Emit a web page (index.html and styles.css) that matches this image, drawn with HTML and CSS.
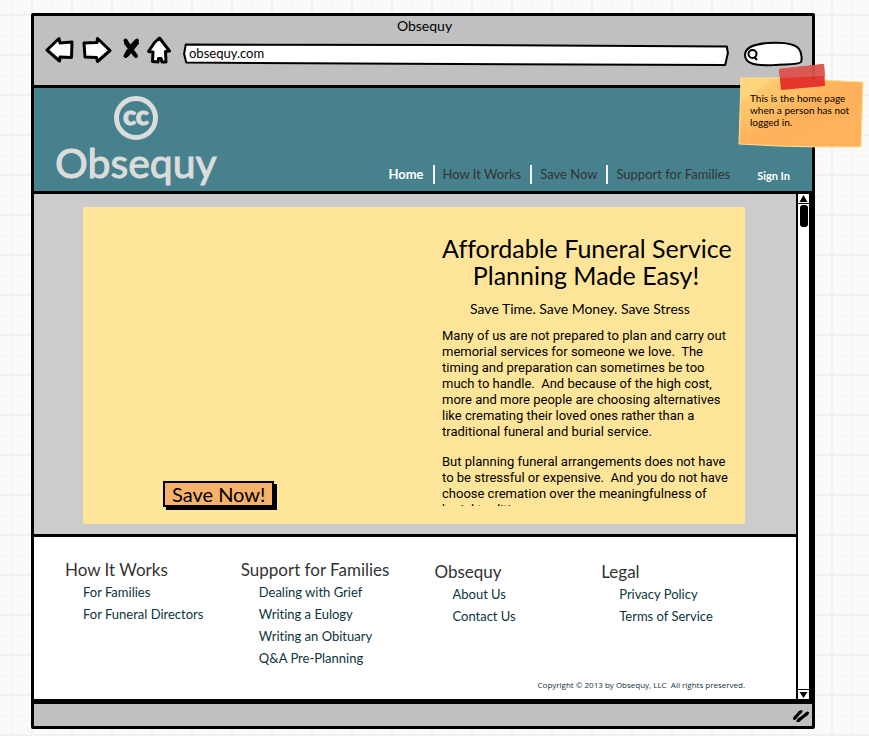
FILE: index.html
```html
<!DOCTYPE html>
<html lang="en">
<head>
<meta charset="utf-8">
<meta name="viewport" content="width=device-width, initial-scale=1">
<title>Obsequy</title>
<link rel="stylesheet" href="styles.css">
</head>
<body>
<div class="window">
  <div class="chrome">
    <div class="window-title">Obsequy</div>
    <div class="toolbar">
      <button class="tool tool-back" type="button" aria-label="Back"><svg width="30" height="28" viewBox="0 0 30 28"><path d="M2 14 14 2.500 15 7 27 6 26.500 21.500 15 21 14.500 25Z"/></svg></button>
      <button class="tool tool-forward" type="button" aria-label="Forward"><svg width="30" height="28" viewBox="0 0 30 28"><path d="M2 7 15 6.500 15.500 2.500 28 14.500 15.500 25.500 14.500 21.500 3 21Z"/></svg></button>
      <button class="tool tool-stop" type="button" aria-label="Stop"><svg width="18" height="28" viewBox="0 0 18 28"><path class="cross" d="M3.500 4.500Q8 12.500 14 20M15 4.500Q8 11 3.500 20M4 7 13 19M15 7 5 19"/></svg></button>
      <button class="tool tool-home" type="button" aria-label="Home page"><svg width="24" height="28" viewBox="0 0 24 28"><path d="M12.500 2 22.500 15 18.500 15.500 19 26 15 26 14 22.500 11.500 22.500 11 26 5.500 25.500 6 16 1.500 15.500 7.500 6.500Z"/></svg></button>
      <div class="address">
        <svg viewBox="0 0 100 24" preserveAspectRatio="none" aria-hidden="true"><path d="M.5 1.500 50 2 99.600 3.500 99.800 10 99.300 22 50 21 .6 19.500 .2 11Z"/></svg>
        <input type="text" value="obsequy.com" aria-label="Address">
      </div>
      <div class="search">
        <svg viewBox="0 0 61 26" aria-hidden="true"><path d="M2 13C2 5 11 2 25 1 43 0 53 3 56 7 59 11 59 18 58 20 56 23 43 22 31 23 13 24 2 22 2 13Z"/><circle cx="9.500" cy="12" r="4"/><path d="M11 15 14 18"/></svg>
        <input type="search" aria-label="Search">
      </div>
    </div>
  </div>

  <header class="site-header">
    <a class="brand" href="#"><span class="brand-mark">cc</span><span class="brand-name">Obsequy</span></a>
    <nav class="site-nav" aria-label="Main">
      <a class="current" href="#">Home</a>
      <a href="#">How It Works</a>
      <a href="#">Save Now</a>
      <a href="#">Support for Families</a>
    </nav>
    <a class="sign-in" href="#">Sign In</a>
  </header>

  <div class="viewport">
    <div class="page">
      <main class="hero">
        <div class="hero-panel">
          <div class="hero-action"><button class="save" type="button">Save Now!</button></div>
          <div class="hero-copy">
            <h1>Affordable Funeral Service<br>Planning Made Easy!</h1>
            <p class="tagline">Save Time. Save Money. Save Stress</p>
            <div class="story">
              <p>Many of us are not prepared to plan and carry out<br>memorial services for someone we love.&nbsp; The<br>timing and preparation can sometimes be too<br>much to handle.&nbsp; And because of the high cost,<br>more and more people are choosing alternatives<br>like cremating their loved ones rather than a<br>traditional funeral and burial service.</p>
              <p>But planning funeral arrangements does not have<br>to be stressful or expensive.&nbsp; And you do not have<br>choose cremation over the meaningfulness of<br>burial traditions.</p>
            </div>
          </div>
        </div>
      </main>
      <footer class="site-footer">
        <div class="columns">
          <section><h2>How It Works</h2><ul><li><a href="#">For Families</a></li><li><a href="#">For Funeral Directors</a></li></ul></section>
          <section><h2>Support for Families</h2><ul><li><a href="#">Dealing with Grief</a></li><li><a href="#">Writing a Eulogy</a></li><li><a href="#">Writing an Obituary</a></li><li><a href="#">Q&amp;A Pre-Planning</a></li></ul></section>
          <section class="lower"><h2>Obsequy</h2><ul><li><a href="#">About Us</a></li><li><a href="#">Contact Us</a></li></ul></section>
          <section class="lower"><h2>Legal</h2><ul><li><a href="#">Privacy Policy</a></li><li><a href="#">Terms of Service</a></li></ul></section>
        </div>
        <p class="copyright">Copyright © 2013 by Obsequy, LLC&nbsp; All rights preserved.</p>
      </footer>
    </div>
    <div class="scrollbar" aria-hidden="true">
      <svg class="arrow up" viewBox="0 0 11 9"><path d="M5.500 1 9.500 8 1.500 8Z"/></svg>
      <div class="thumb"></div>
      <svg class="arrow down" viewBox="0 0 11 9"><path d="M1.500 2 9.500 2 5.500 8Z"/></svg>
    </div>
  </div>

  <div class="status"><svg width="18" height="14" viewBox="0 0 18 14" aria-hidden="true"><path d="M2.500 10.500 8 4M6 13 15.500 5M3 9.500 9 3.500M7 11.500 15 6"/></svg></div>

  <aside class="note">
    <svg class="paper" viewBox="0 0 126 72" preserveAspectRatio="none" aria-hidden="true">
      <defs><linearGradient id="paper" x1="0" y1="0" x2="1" y2="1"><stop offset="0" stop-color="#ffd277"/><stop offset=".28" stop-color="#ffc368"/><stop offset=".5" stop-color="#ffb05b"/><stop offset="1" stop-color="#ffb25c"/></linearGradient></defs>
      <path d="M3 1 40 1 86 3 125 5 124 40 123 70 80 70 40 69 1 67 2 35Z" fill="url(#paper)" stroke="#ffe48c"/>
      <path d="M4 3 35 2 18 14 4 25Z" fill="#ffdb83" opacity=".6"/>
    </svg>
    <svg class="tape" viewBox="0 0 46 27" aria-hidden="true"><path d="M0 5 45 0 46 22 2 26Z" fill="#e32f27"/><path d="M0 5 45 0 46 12 1 14Z" fill="#dc544e"/></svg>
    <p>This is the home page<br>when a person has not<br>logged in.</p>
  </aside>
</div>
</body>
</html>
```
FILE: styles.css
```css
* { box-sizing: border-box; }

body {
  margin: 0;
  padding: 13px 54px 7px 31px;
  font-family: Lato, "Liberation Sans", sans-serif;
  font-size: 14px;
  font-variant-ligatures: none;
  line-height: 16px;
  color: #000;
  background-color: #fafafa;
  background-image:
    linear-gradient(90deg, #f1f1f1 2px, transparent 2px),
    linear-gradient(#f1f1f1 2px, transparent 2px),
    linear-gradient(90deg, #f4f4f4 1px, transparent 1px),
    linear-gradient(#f4f4f4 1px, transparent 1px);
  background-size: 40px 40px;
  background-position: 31px 0, 0 14px, 12px 0, 0 35px;
}

a { color: inherit; text-decoration: none; }
h1, h2, p, ul { margin: 0; padding: 0; font-weight: 400; }
ul { list-style: none; }
button, input { font: inherit; color: inherit; }

.window {
  position: relative;
  border: 3px solid #000;
  border-radius: 2px;
  background: #c0c0c0;
}

/* browser chrome */
.chrome { padding: 2px 8px 17px 11px; border-bottom: 3px solid #000; }
.window-title { text-align: center; }
.toolbar { display: flex; align-items: center; height: 34px; }
.tool { display: block; padding: 0; border: 0; background: none; margin-right: 7px; }
.tool svg { display: block; margin-top: -2px; fill: #fff; stroke: #000; stroke-width: 3; stroke-linejoin: round; }
.tool-forward { margin-right: 10px; }
.tool .cross { fill: none; stroke-width: 4; stroke-linecap: round; }
.tool-home { margin-right: 12px; }
.address { position: relative; flex: 1; height: 24px; margin: 7px 14px 0 0; }
.search { position: relative; flex: none; width: 61px; height: 26px; margin-top: 7px; }
.address svg, .search svg {
  position: absolute;
  inset: 0;
  width: 100%;
  height: 100%;
  overflow: visible;
  fill: #fff;
  stroke: #000;
  stroke-width: 2;
  stroke-linejoin: round;
}
.address path { vector-effect: non-scaling-stroke; }
.address input, .search input {
  position: relative;
  display: block;
  width: 100%;
  height: 20px;
  padding: 0 6px;
  border: 0;
  outline: 0;
  background: none;
  font-size: 13px;
}
.search input { padding-left: 20px; }

/* site header */
.site-header {
  display: flex;
  align-items: flex-end;
  height: 106px;
  padding: 0 22px 5px 21px;
  border-bottom: 3px solid #000;
  background: #47818e;
}
.brand { display: flex; flex-direction: column; align-items: center; color: #dcdcdc; }
.brand-mark {
  width: 44px;
  height: 44px;
  border: 5px solid;
  border-radius: 50%;
  font-size: 27px;
  font-weight: 900;
  line-height: 27px;
  text-align: center;
  -webkit-text-stroke: 1px #dcdcdc;
}
.brand-name { font-size: 41px; line-height: 46px; -webkit-text-stroke: 1px #dcdcdc; }
.site-nav { display: flex; margin-left: auto; font-size: 13px; color: #333; }
.site-nav a { padding: 0 9px 0 8px; line-height: 19px; margin-bottom: 2px; }
.site-nav a + a { border-left: 2px solid #f3f3f3; }
.site-nav .current { color: #fff; font-weight: 700; }
.sign-in { margin: 0 0 2px 18px; font-size: 11px; font-weight: 700; color: #fff; }

/* scrolling page */
.viewport { display: flex; }
.page { flex: 1; min-width: 0; }
.hero { padding: 13px 51px 10px 49px; border-bottom: 3px solid #000; background: #ccc; }
.hero-panel { display: flex; background: #ffe599; }
.hero-action { flex: 1; display: flex; align-items: flex-end; padding: 0 0 17px 80px; }
.save {
  padding: 0 7px;
  border: 2px solid #000;
  background: #f6b26b;
  box-shadow: 3px 3px 0 #000;
  font-size: 20px;
  line-height: 22px;
}
.hero-copy { flex: none; width: 303px; padding: 28px 0 18px; }
.hero-copy h1 { width: 288px; font-size: 25px; line-height: 27px; text-align: center; white-space: nowrap; }
.tagline { width: 276px; margin-top: 12px; text-align: center; }
.story { height: 178px; margin-top: 11px; overflow: hidden; font-family: Roboto, "Liberation Sans", sans-serif; font-size: 13px; white-space: nowrap; }
.story p + p { margin-top: 14px; }

.site-footer { padding: 22px 51px 8px 31px; background: #fff; color: #0c343d; }
.columns { display: grid; grid-template-columns: 176fr 194fr 167fr 144fr; min-height: 120px; }
.columns h2 { font-size: 17px; line-height: 22px; color: #333; }
.columns ul { padding-left: 18px; }
.columns li { font-size: 13px; line-height: 22px; }
.columns .lower { padding-top: 2px; }
.copyright { font-family: "Open Sans", "Liberation Sans", sans-serif; font-size: 8px; line-height: 12px; text-align: right; }

.scrollbar {
  display: flex;
  flex-direction: column;
  width: 16px;
  border: solid #000;
  border-width: 0 2px;
  background: #fff;
  box-shadow: inset -1px 0 0 #000;
}
.arrow { flex: none; width: 11px; height: 10px; }
.up { border-bottom: 1px solid #000; }
.down { margin-top: auto; border-top: 1px solid #000; }
.thumb { width: 8px; height: 22px; margin: 1px 0 0 2px; border-radius: 3px; background: #000; }

.status { display: flex; justify-content: flex-end; padding: 4px 2px; border-top: 5px solid #000; }
.status svg { fill: none; stroke: #000; stroke-width: 3; stroke-linecap: round; }

/* sticky annotation */
.note {
  position: absolute;
  top: 61px;
  right: -52px;
  width: 126px;
  height: 72px;
  padding: 15px 0 0 12px;
  font-size: 10px;
  line-height: 12px;
  white-space: nowrap;
}
.note p { position: relative; }
.paper { position: absolute; inset: 0; width: 100%; height: 100%; }
.tape { position: absolute; top: -13px; left: 41px; width: 46px; height: 27px; opacity: .95; }
```
